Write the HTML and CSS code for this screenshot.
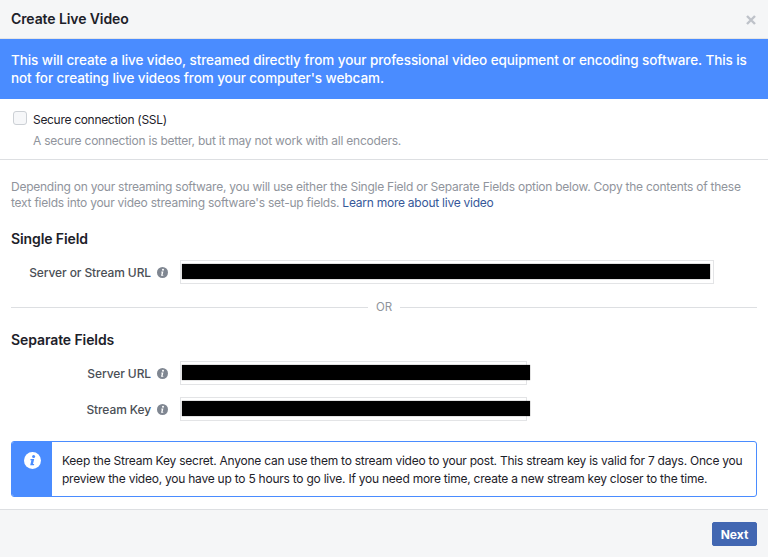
FILE: index.html
```html
<!DOCTYPE html>
<html lang="en">
<head>
<meta charset="utf-8">
<title>Create Live Video</title>
<link rel="stylesheet" href="styles.css">
</head>
<body>
<div class="dialog">
  <header class="head">
    <h1 class="title">Create Live Video</h1>
    <svg class="close" width="10" height="10" viewBox="0 0 10 10"><path d="M1 1l8 8M9 1l-8 8" stroke="#bec2c9" stroke-width="2.4" fill="none"/></svg>
  </header>
  <div class="banner">This will create a live video, streamed directly from your professional video equipment or encoding software. This is not for creating live videos from your computer's webcam.</div>
  <section class="ssl">
    <span class="checkbox"></span>
    <div class="ssl-text">
      <div class="ssl-label">Secure connection (SSL)</div>
      <div class="ssl-hint">A secure connection is better, but it may not work with all encoders.</div>
    </div>
  </section>
  <main class="body">
    <p class="intro">Depending on your streaming software, you will use either the Single Field or Separate Fields option below. Copy the contents of these text fields into your video streaming software's set-up fields. <a class="link" href="#">Learn more about live video</a></p>
    <h2 class="section-title first">Single Field</h2>
    <div class="row">
      <div class="label">Server or Stream URL<svg class="i" width="11" height="11" viewBox="0 0 11 11"><circle cx="5.5" cy="5.5" r="5.5" fill="#7f8691"/><circle cx="6" cy="2.7" r="1" fill="#fff"/><path d="M4.4 4.6h2l-.8 3.3h.8l-.2.8H4l.8-3.3h-.6z" fill="#fff"/></svg></div>
      <div class="field wide"><span class="redact"></span></div>
    </div>
    <div class="or"><span class="or-line"></span><span class="or-text">OR</span><span class="or-line"></span></div>
    <h2 class="section-title">Separate Fields</h2>
    <div class="row">
      <div class="label">Server URL<svg class="i" width="11" height="11" viewBox="0 0 11 11"><circle cx="5.5" cy="5.5" r="5.5" fill="#7f8691"/><circle cx="6" cy="2.7" r="1" fill="#fff"/><path d="M4.4 4.6h2l-.8 3.3h.8l-.2.8H4l.8-3.3h-.6z" fill="#fff"/></svg></div>
      <div class="field narrow"><span class="redact over"></span></div>
    </div>
    <div class="row second">
      <div class="label">Stream Key<svg class="i" width="11" height="11" viewBox="0 0 11 11"><circle cx="5.5" cy="5.5" r="5.5" fill="#7f8691"/><circle cx="6" cy="2.7" r="1" fill="#fff"/><path d="M4.4 4.6h2l-.8 3.3h.8l-.2.8H4l.8-3.3h-.6z" fill="#fff"/></svg></div>
      <div class="field narrow"><span class="redact over"></span></div>
    </div>
    <div class="notice">
      <div class="notice-side"><svg width="17" height="17" viewBox="0 0 17 17"><circle cx="8.5" cy="8.5" r="8.5" fill="#fff"/><circle cx="9.6" cy="4.4" r="1.5" fill="#4a8cff"/><path d="M6.6 7.1h3.6l-1.2 5h1.2l-.3 1.2H6.2l1.2-5H6.3z" fill="#4a8cff"/></svg></div>
      <div class="notice-text">Keep the Stream Key secret. Anyone can use them to stream video to your post. This stream key is valid for 7 days. Once you preview the video, you have up to 5 hours to go live. If you need more time, create a new stream key closer to the time.</div>
    </div>
  </main>
  <footer class="foot"><button class="next" type="button">Next</button></footer>
</div>
</body>
</html>
```

FILE: styles.css
```css
* { box-sizing: border-box; }
html, body { margin: 0; padding: 0; }
body { background: #fff; font-family: Inter, "Liberation Sans", sans-serif; color: #1d2129; }
.dialog { width: 768px; height: 557px; display: flex; flex-direction: column; overflow: hidden; }
.head { height: 39px; flex: none; background: #f5f6f7; border-bottom: 1px solid #e5e5e5; display: flex; align-items: center; justify-content: space-between; padding: 0 12px 0 11px; }
.title { margin: 0; font-size: 14px; font-weight: 600; line-height: 38px; letter-spacing: -0.1px; }
.close { margin-top: 2px; }
.banner { height: 60px; flex: none; background: #4a8cff; color: #fff; font-size: 13.5px; font-weight: 500; line-height: 18px; letter-spacing: -0.08px; padding: 12px 11px; }
.ssl { height: 61px; flex: none; border-bottom: 1px solid #dddfe2; display: flex; padding: 12px 0 0 13px; }
.checkbox { width: 14px; height: 14px; border: 1px solid #ccd0d5; border-radius: 3px; background: #f6f7f9; margin-right: 6px; }
.ssl-text { font-size: 12px; line-height: 21px; margin-top: -2.5px; }
.ssl-label { color: #1d2129; letter-spacing: -0.31px; }
.ssl-hint { color: #90949c; letter-spacing: -0.235px; }
.body { flex: 1; padding: 19px 11px 0; }
.intro { margin: 0; font-size: 12px; line-height: 16px; letter-spacing: -0.245px; color: #90949c; }
.link { color: #365899; text-decoration: none; }
.section-title { margin: 0; font-size: 14px; font-weight: 600; line-height: 18px; letter-spacing: -0.1px; }
.section-title.first { margin-top: 19px; }
.row { display: flex; align-items: center; margin-top: 12px; height: 24px; }
.row.second { margin-top: 12px; }
.label { width: 158px; display: flex; justify-content: flex-end; align-items: center; font-size: 12px; font-weight: 500; letter-spacing: -0.1px; color: #4b4f56; }
.i { margin-left: 6px; margin-right: 1px; flex: none; }
.field { position: relative; height: 24px; margin-left: 11px; background: #fff; border: 1px solid #e3e4e6; }
.field.wide { width: 534px; }
.field.narrow { width: 347px; }
.redact { position: absolute; left: 1px; top: 3px; height: 15px; background: #000; box-shadow: 0 0 1px #555; }
.field.wide .redact { width: 528px; }
.redact.over { width: 348px; }
.or { display: flex; align-items: center; margin-top: 12px; height: 22px; }
.or-line { flex: 1; height: 1px; background: #dddfe2; }
.or-text { font-size: 11.5px; color: #90949c; padding: 0 8px; }
.or + .section-title { margin-top: 13px; }
.notice { display: flex; height: 56px; margin-top: 20px; border: 1px solid #4a8cff; border-radius: 3px; overflow: hidden; }
.notice-side { width: 40px; flex: none; background: #4a8cff; display: flex; justify-content: center; padding-top: 10px; }
.notice-text { font-size: 12px; line-height: 18px; letter-spacing: -0.235px; padding: 10px 10px; color: #1d2129; }
.foot { height: 48px; flex: none; background: #f5f6f7; border-top: 1px solid #dddfe2; display: flex; justify-content: flex-end; align-items: flex-start; padding: 12px 11px 0 0; }
.next { width: 45px; height: 24px; padding: 0; background: #4267b2; color: #fff; border: 1px solid #4267b2; border-radius: 2px; font-family: inherit; font-size: 12px; font-weight: 700; }
```
